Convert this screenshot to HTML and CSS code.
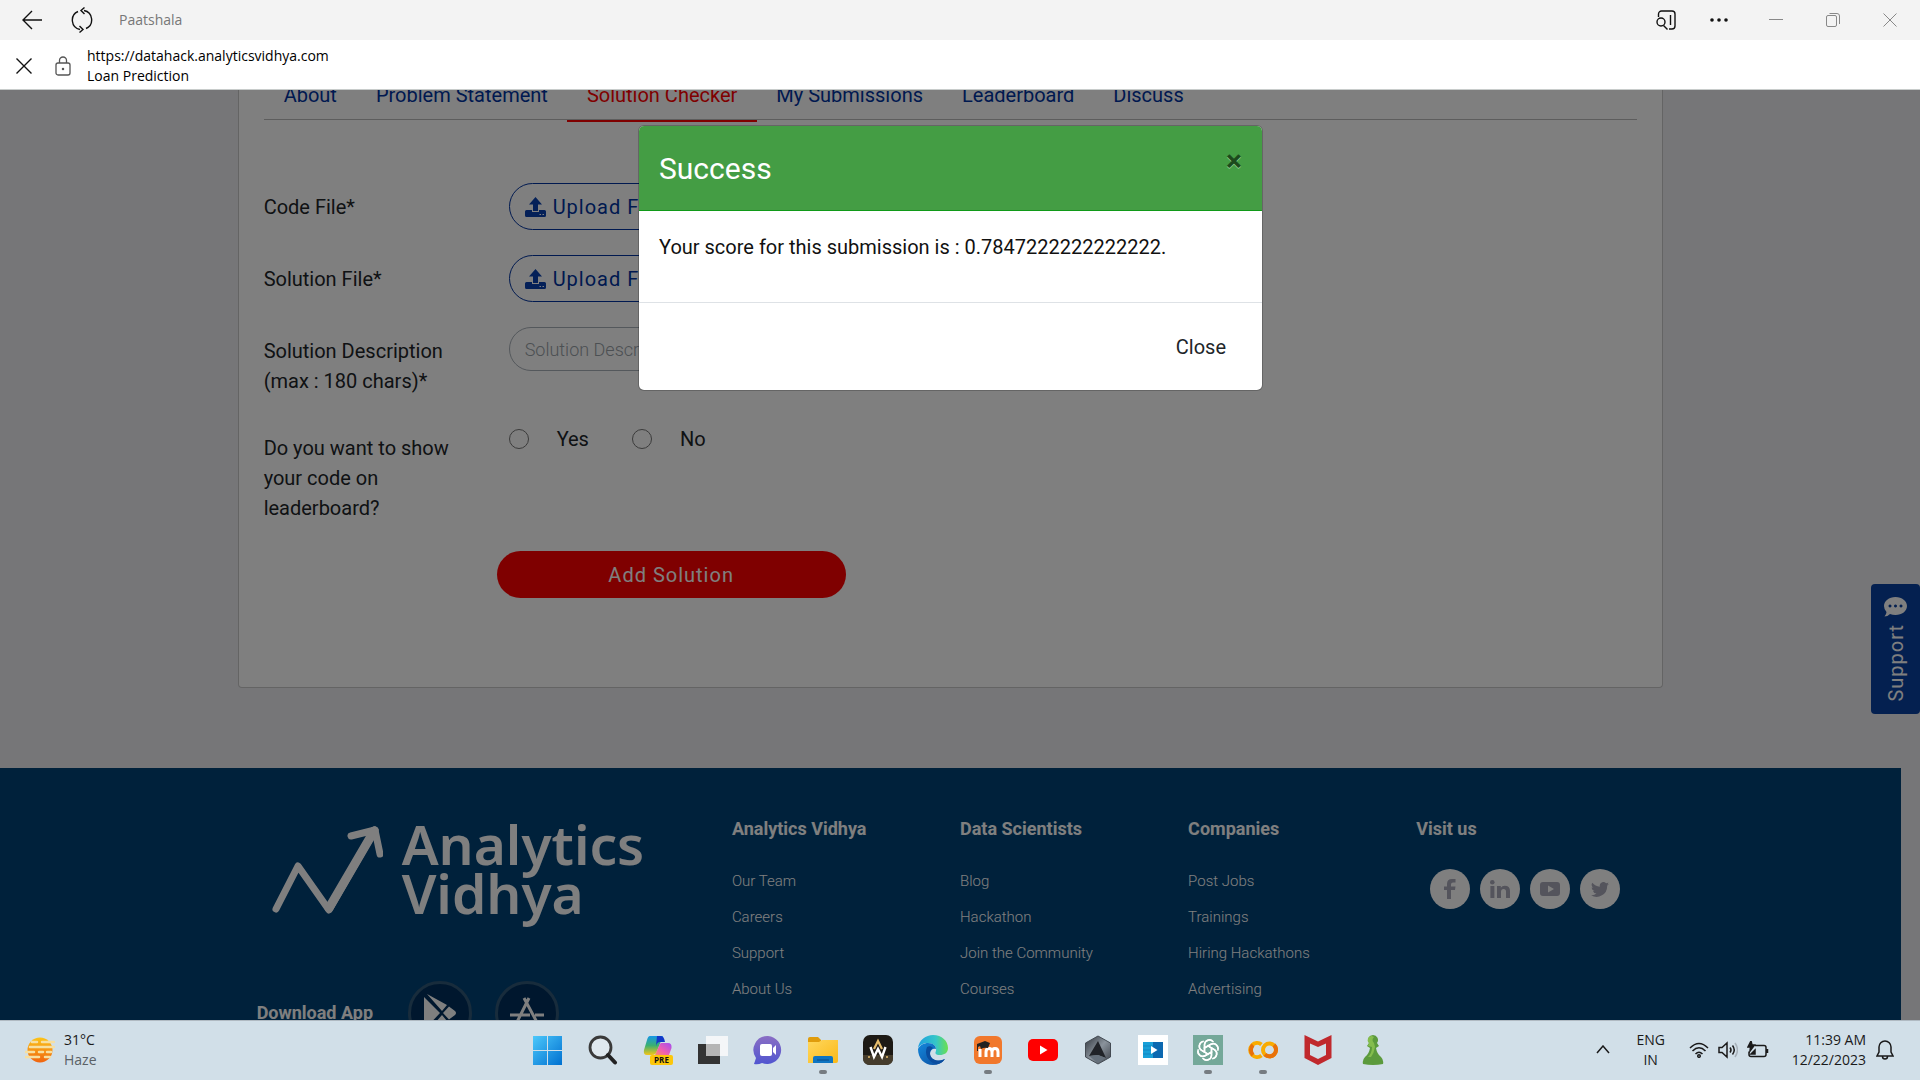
FILE: index.html
```html
<!DOCTYPE html>
<html lang="en">
<head>
<meta charset="utf-8">
<title>Loan Prediction</title>
<link rel="stylesheet" href="styles.css">
</head>
<body>
<header class="titlebar">
  <button class="icon-btn" aria-label="Back"><svg width="22" height="20" viewBox="0 0 22 20"><path d="M21 10H2M11 1L2 10l9 9"/></svg></button>
  <button class="icon-btn reload" aria-label="Refresh"><svg width="22" height="26" viewBox="0 0 22 26"><path d="M7 4.500A9.500 9.500 0 0 0 9 22.500M13 3.500a9.500 9.500 0 0 1 2 18M8.500 25.500l3.500-3-3.500-3.500M13.500.5L10 3.500l3.500 3.500"/></svg></button>
  <span class="app-name">Paatshala</span>
  <div class="window-tools">
    <button class="icon-btn" aria-label="Search in sidebar"><svg width="20" height="20" viewBox="0 0 20 20"><path d="M2.500 7V4a3 3 0 0 1 3-3H16a3 3 0 0 1 3 3v12a3 3 0 0 1-3 3h-3M14.500 5v10"/><circle cx="5" cy="12" r="4"/><path d="M7.500 15.500l4 4"/></svg></button>
    <button class="icon-btn" aria-label="More"><svg class="solid" width="20" height="20" viewBox="0 0 20 20"><circle cx="3" cy="10" r="1.800"/><circle cx="10" cy="10" r="1.800"/><circle cx="17" cy="10" r="1.800"/></svg></button>
    <button class="icon-btn dim" aria-label="Minimize"><svg width="14" height="14" viewBox="0 0 14 14"><path d="M0 6.500h14"/></svg></button>
    <button class="icon-btn dim" aria-label="Restore"><svg width="14" height="14" viewBox="0 0 14 14"><rect x=".5" y="2.500" width="10" height="11" rx="1.500"/><path d="M3.500.5H11a2.500 2.500 0 0 1 2.500 2.500v8"/></svg></button>
    <button class="icon-btn dim" aria-label="Close window"><svg width="14" height="14" viewBox="0 0 14 14"><path d="M.5.5l13 13M13.500.5l-13 13"/></svg></button>
  </div>
</header>
<div class="addressbar">
  <button class="icon-btn" aria-label="Stop"><svg width="16" height="16" viewBox="0 0 16 16"><path d="M.5.5l15 15M15.500.5l-15 15"/></svg></button>
  <svg class="lock" width="16" height="20" viewBox="0 0 16 20"><rect x="1" y="7" width="14" height="12" rx="2"/><path d="M4.500 7V4.500a3.500 3.500 0 0 1 7 0V7"/><circle cx="8" cy="13" r=".6"/></svg>
  <div class="address"><div>https://datahack.analyticsvidhya.com</div><div>Loan Prediction</div></div>
</div>

<div class="viewport">
  <div class="page">
    <main class="card">
      <nav class="tabs">
        <a href="#about">About</a><a href="#problem">Problem Statement</a><a class="active" href="#checker">Solution Checker</a><a href="#submissions">My Submissions</a><a href="#leaderboard">Leaderboard</a><a href="#discuss">Discuss</a>
      </nav>
      <form class="form">
        <label for="code">Code File*</label>
        <button class="upload" id="code" type="button"><svg width="21" height="20" viewBox="0 0 21 20"><path d="M10.500 0l6.500 7.500h-4V14H8V7.500H4z"/><path d="M0 14.500a1.500 1.500 0 0 1 1.500-1.500H7v2h7v-2h5.500a1.500 1.500 0 0 1 1.500 1.500v4a1.500 1.500 0 0 1-1.500 1.500h-18A1.500 1.500 0 0 1 0 18.500z"/><path class="led" d="M14.500 17h1.500v1h-1.500zM17.500 17H19v1h-1.500z"/></svg>Upload File</button>
        <label for="solution">Solution File*</label>
        <button class="upload" id="solution" type="button"><svg width="21" height="20" viewBox="0 0 21 20"><path d="M10.500 0l6.500 7.500h-4V14H8V7.500H4z"/><path d="M0 14.500a1.500 1.500 0 0 1 1.500-1.500H7v2h7v-2h5.500a1.500 1.500 0 0 1 1.500 1.500v4a1.500 1.500 0 0 1-1.500 1.500h-18A1.500 1.500 0 0 1 0 18.500z"/><path class="led" d="M14.500 17h1.500v1h-1.500zM17.500 17H19v1h-1.500z"/></svg>Upload File</button>
        <label for="description">Solution Description (max : 180 chars)*</label>
        <input class="description" id="description" type="text" placeholder="Solution Description">
        <span class="question">Do you want to show your code on leaderboard?</span>
        <div class="choices">
          <label><input type="radio" name="show">Yes</label>
          <label><input type="radio" name="show">No</label>
        </div>
        <button class="submit" type="button">Add Solution</button>
      </form>
    </main>
    <footer class="footer">
      <div class="footer-grid">
        <div class="brand">
          <div class="logo">
            <svg width="112" height="96" viewBox="0 0 112 96"><path class="trend" d="M5 87L27 44l31 44L104 8"/><path class="thick" d="M58 86L103 9"/><path class="head" d="M80 14l24-6 5 24"/></svg>
            <div class="wordmark"><div>Analytics</div><div>Vidhya</div></div>
          </div>
          <div class="download">
            <span>Download App</span>
            <a href="#play" aria-label="Google Play"><svg width="32" height="38" viewBox="0 0 32 38"><path d="M0 3l16 16L0 36zM3 0l20 11-5 6zM3 38l20-11-5-6zM25 12.500l6 4.500q2 2 0 4l-6 4.500L19 19z"/></svg></a>
            <a href="#ios" aria-label="App Store"><svg class="line" width="36" height="34" viewBox="0 0 36 34"><path d="M20 2L6 30M15 2l15 28M1 19h20M26 19h9"/></svg></a>
          </div>
        </div>
        <section><h2>Analytics Vidhya</h2><a href="#team">Our Team</a><a href="#careers">Careers</a><a href="#support">Support</a><a href="#us">About Us</a></section>
        <section><h2>Data Scientists</h2><a href="#blog">Blog</a><a href="#hackathon">Hackathon</a><a href="#community">Join the Community</a><a href="#courses">Courses</a></section>
        <section><h2>Companies</h2><a href="#jobs">Post Jobs</a><a href="#trainings">Trainings</a><a href="#hiring">Hiring Hackathons</a><a href="#ads">Advertising</a></section>
        <section><h2>Visit us</h2>
          <div class="social">
            <a href="#fb" aria-label="Facebook"><svg width="12" height="20" viewBox="0 0 12 20"><path d="M3 20v-9H0V7.500h3V5q0-5 5-5h3.500v3.500H9Q7 3.500 7 5.500v2h4.500L11 11H7v9z"/></svg></a>
            <a href="#in" aria-label="LinkedIn"><svg width="20" height="18" viewBox="0 0 20 18"><circle cx="2.300" cy="2.300" r="2.300"/><path d="M.4 6h4v12h-4zM7 6h3.800v1.700Q12 5.700 14.700 5.700 20 5.700 20 11v7h-4v-6.200q0-2.800-2.400-2.800Q11 9 11 12v6H7z"/></svg></a>
            <a href="#yt" aria-label="YouTube"><svg width="20" height="14" viewBox="0 0 20 14"><path fill-rule="evenodd" d="M3 0q7-.5 14 0 3 0 3 3v8q0 3-3 3-7 .5-14 0-3 0-3-3V3q0-3 3-3zm5 3.500v7l6-3.500z"/></svg></a>
            <a href="#tw" aria-label="Twitter"><svg width="18" height="15" viewBox="0 0 24 20"><path d="M24 2.400a10 10 0 0 1-2.800.8A5 5 0 0 0 23.300.5a10 10 0 0 1-3.100 1.200 4.900 4.900 0 0 0-8.400 4.500A14 14 0 0 1 1.700 1a4.900 4.900 0 0 0 1.500 6.600 5 5 0 0 1-2.200-.6 4.900 4.900 0 0 0 3.900 4.900 5 5 0 0 1-2.200.1 4.900 4.900 0 0 0 4.600 3.400A10 10 0 0 1 0 17.500 14 14 0 0 0 21.500 5a10 10 0 0 0 2.500-2.600z"/></svg></a>
          </div>
        </section>
      </div>
    </footer>
  </div>
  <button class="support"><svg width="23" height="20" viewBox="0 0 23 20"><path fill-rule="evenodd" d="M11.500 0C18 0 23 4 23 9s-5 9-11.500 9q-3 0-5.500-1-2.500 2.500-5.500 2.500Q2.500 17 2.500 15 0 12.500 0 9c0-5 5-9 11.500-9zM6 7.500a1.500 1.500 0 1 0 .01 0zm5.500 0a1.500 1.500 0 1 0 .01 0zm5.500 0a1.500 1.500 0 1 0 .01 0z"/></svg><span>Support</span></button>
  <div class="backdrop">
    <div class="modal" role="dialog" aria-labelledby="modal-title">
      <div class="modal-head"><h1 id="modal-title">Success</h1><button class="dismiss" aria-label="Dismiss">×</button></div>
      <div class="modal-body">Your score for this submission is : 0.7847222222222222.</div>
      <div class="modal-foot"><button class="close">Close</button></div>
    </div>
  </div>
</div>

<div class="taskbar">
  <svg width="0" height="0" class="defs"><defs>
    <linearGradient id="win" x2="1" y2="1"><stop offset="0" stop-color="#4cc8fb"/><stop offset="1" stop-color="#0070d0"/></linearGradient>
    <linearGradient id="sun" x2="0" y2="1"><stop offset="0" stop-color="#fcc419"/><stop offset="1" stop-color="#f06410"/></linearGradient>
    <linearGradient id="cop1" x2="0" y2="1"><stop offset="0" stop-color="#1496e8"/><stop offset=".5" stop-color="#3bb070"/><stop offset="1" stop-color="#f5c518"/></linearGradient>
    <linearGradient id="cop2" x1="1" x2="0" y2="1"><stop offset="0" stop-color="#a44cf0"/><stop offset=".6" stop-color="#f060b0"/><stop offset="1" stop-color="#fb9060"/></linearGradient>
    <linearGradient id="chat" x2="0" y2="1"><stop offset="0" stop-color="#8a6ec4"/><stop offset="1" stop-color="#5055d0"/></linearGradient>
    <linearGradient id="folder" x2="1" y2="1"><stop offset="0" stop-color="#ffd75e"/><stop offset="1" stop-color="#fbb917"/></linearGradient>
    <linearGradient id="edge1" x2="1"><stop offset="0" stop-color="#1fa0e0"/><stop offset=".6" stop-color="#35c6c8"/><stop offset="1" stop-color="#6be04c"/></linearGradient>
    <linearGradient id="edge2" x2="1" y2="1"><stop offset="0" stop-color="#1488dc"/><stop offset="1" stop-color="#0b4a9c"/></linearGradient>
    <linearGradient id="hex" x2="1" y2="1"><stop offset="0" stop-color="#30353c"/><stop offset=".5" stop-color="#8a939c"/><stop offset="1" stop-color="#3a3f47"/></linearGradient>
  </defs></svg>
  <div class="weather">
    <svg width="30" height="26" viewBox="0 0 30 26"><circle cx="15" cy="13" r="12.500" fill="url(#sun)"/><path d="M7 5h5M17 5h12M5 10h24M0 15h9M14 15h4M22 15h4M0 20h14M20 20h5" stroke="#f7dfa0" stroke-width="2.500" stroke-linecap="round"/></svg>
    <div><div>31°C</div><div class="muted">Haze</div></div>
  </div>
  <div class="apps">
    <button aria-label="Start"><svg viewBox="0 0 30 30"><path fill="url(#win)" d="M0 1h14v14H0zM15 1h14v14H15zM0 16h14v14H0zM15 16h14v14H15z"/></svg></button>
    <button aria-label="Search"><svg viewBox="0 0 30 30"><circle cx="12.500" cy="12.500" r="10.500" fill="#dfe8ee" stroke="#3a3a3a" stroke-width="2.800"/><path d="M20 20l7 7.500" stroke="#222" stroke-width="4" stroke-linecap="round"/></svg></button>
    <button aria-label="Copilot"><svg viewBox="0 0 30 30"><path fill="url(#cop1)" d="M7 1h13l-6 15q-1 4-5 4H4q-4 0-3-5L4 5q1-4 3-4z"/><path fill="#1238c8" d="M14 1h4q3 0 4 6h-5q-3 0-4 4z"/><path fill="url(#cop2)" d="M18 8h7q4 0 3.500 5L26 20H12l4-9q1-3 2-3z"/><rect x="7" y="20" width="23" height="10" rx="2" fill="#fcc70a"/><text x="18.500" y="28" text-anchor="middle" class="pre">PRE</text></svg></button>
    <button aria-label="Task view"><svg viewBox="0 0 30 30"><path fill="#333" d="M0 9h22v20H0z"/><path fill="#fafafa" fill-opacity=".85" d="M8 1h22v20H8z"/><path fill="#b5b5b5" d="M8 9h14v12H8z"/></svg></button>
    <button aria-label="Chat"><svg viewBox="0 0 30 30"><path fill="url(#chat)" d="M15 1a14 14 0 1 1-6 27q-4 2-8 1 1-3 2-6A14 14 0 0 1 15 1z"/><rect x="7" y="9" width="12" height="12" rx="2" fill="#fff"/><path fill="#fff" d="M20 13l3-3v10l-3-3z"/></svg></button>
    <button class="running" aria-label="File Explorer"><svg viewBox="0 0 30 30"><path fill="#e09c0c" d="M0 4q0-2 2-2h8l3 3v6H0z"/><path fill="url(#folder)" d="M0 7h11l3-2h16v21q0 2-2 2H0z"/><path fill="#0f75c2" d="M5 23q0-2 2-2h16q2 0 2 2v5H5z"/><path d="M9 25h12" stroke="#0a4a86"/></svg></button>
    <button aria-label="WA"><svg viewBox="0 0 30 30"><rect width="30" height="30" rx="7" fill="#1d1a15"/><path d="M0 20h30v3q0 7-7 7H7q-7 0-7-7z" fill="#453c2c"/><path d="M11 14l4-8 4 8" fill="none" stroke="#e6bd6c" stroke-width="2.200"/><path d="M7.500 12l3.500 10 4-8 4 8 3.500-10" fill="none" stroke="#fff" stroke-width="2.400"/><circle cx="6" cy="22" r="1" fill="#e6bd6c"/><circle cx="24" cy="22" r="1" fill="#e6bd6c"/></svg></button>
    <button aria-label="Edge"><svg viewBox="0 0 30 30"><path fill="url(#edge1)" d="M0 13C1 5 8 0 15 0c9 0 15 6 15 13 0 5-4 7-8 7-5 0-5-2-4-4 1-5-3-8-8-8-5 0-8 2-10 5z"/><path fill="url(#edge2)" d="M0 14c2-4 6-6 10-6 5 0 8 3 8 6-3-1-6 1-6 5 0 5 6 8 12 6l3-1c-3 4-7 6-12 6C6 30 0 23 0 14z"/><path fill="#0a4d9f" d="M9 12c-3 7 1 15 9 17 4 0 7-2 9-5-8 4-15 0-15-6 0-2 1-4 3-5-2-2-4-2-6-1z"/></svg></button>
    <button class="running" aria-label="Moodle"><svg viewBox="0 0 30 30"><rect x="1" y="1" width="28" height="28" rx="6" fill="#f1782c"/><path d="M7 22v-8M13 22v-5q0-3.500 3-3.500t3 3.500v5M19 17q0-3.500 3-3.500t3 3.500v5" fill="none" stroke="#fff" stroke-width="3"/><path fill="#222" d="M4 9l8-3 5 2-2 5q-4-1-7 1l-1-3-2 1v4H4z"/></svg></button>
    <button aria-label="YouTube"><svg viewBox="0 0 30 30"><rect y="4" width="30" height="22" rx="5" fill="#f00"/><path fill="#fff" d="M12 10.500v9l7.500-4.500z"/></svg></button>
    <button aria-label="Hexagon"><svg viewBox="0 0 30 30"><path fill="url(#hex)" stroke="#444b53" d="M15 1l12.500 7v14L15 29 2.500 22V8z"/><path fill="#202328" d="M15 6l8 17-8-3-9 1z"/><path fill="#65707b" d="M15 20l8 3-8 5-9-7z"/></svg></button>
    <button aria-label="Video"><svg viewBox="0 0 30 30"><path fill="#fff" d="M0 0h30v30H0z"/><path fill="#18a0d8" d="M5 7h10v16H5z"/><path fill="#0c68b0" d="M15 7h10v16H15z"/><path d="M5 11h10M5 15h10M5 19h10" stroke="#1285c0"/><path fill="#fff" d="M13 11v8l6.500-4z"/></svg></button>
    <button class="running" aria-label="ChatGPT"><svg viewBox="0 0 30 30"><path fill="#74a899" d="M0 0h30v30H0z"/><g fill="none" stroke="#fff" stroke-width="1.500" stroke-linejoin="round"><path id="petal" d="M11.500 18V9.500a5 5 0 0 1 9-2.500M11.500 13l7-4a4.700 4.700 0 0 1 6.500 5"/><use href="#petal" transform="rotate(60 15 15)"/><use href="#petal" transform="rotate(120 15 15)"/><use href="#petal" transform="rotate(180 15 15)"/><use href="#petal" transform="rotate(240 15 15)"/><use href="#petal" transform="rotate(300 15 15)"/></g></svg></button>
    <button class="running" aria-label="Colab"><svg viewBox="0 0 30 30"><g fill="none" stroke-width="4"><path d="M13.500 20.500a7 7 0 1 1 0-11" stroke="#f9ab00"/><path d="M5 10a7 7 0 0 0 0 10" stroke="#e8710a"/><circle cx="21.500" cy="15" r="6.500" stroke="#f9ab00"/><path d="M26 10a6.500 6.500 0 0 1-9 9.500" stroke="#e8710a"/></g></svg></button>
    <button aria-label="McAfee"><svg viewBox="0 0 30 30"><path fill="#c0292d" fill-rule="evenodd" d="M1.500 0L15 6.500 28.500 0v23L15 30 1.500 23zM7 8.500V20l8 4 8-4V8.500L15 12z"/></svg></button>
    <button aria-label="Chess"><svg viewBox="0 0 30 30"><path fill="#5b9a3c" d="M15 0a5 5 0 0 1 4 8l2 3-3 2q1 6 5 9 3 3 2 7-10 2-20 0-1-4 2-7 4-3 5-9l-3-2 2-3a5 5 0 0 1 4-8z"/><path fill="#84bd4d" d="M14 1a4 4 0 0 0-3 7l-1 3 4 1q0 6-4 10h3q3-4 4-10l-1-4q-3-3 0-6z"/></svg></button>
  </div>
  <div class="tray">
    <button aria-label="Show hidden icons"><svg width="14" height="9" viewBox="0 0 14 9"><path d="M1 8l6-7 6 7"/></svg></button>
    <div class="lang">ENG<br>IN</div>
    <div class="status">
      <svg width="20" height="16" viewBox="0 0 20 16"><path d="M1 6q9-9 18 0M3.500 9q6.500-6.500 13 0M6.500 12q3.500-3.500 7 0"/><circle cx="10" cy="14" r="1.300"/></svg>
      <svg width="20" height="18" viewBox="0 0 20 18"><path d="M1 6.500h3l5-4.500v14l-5-4.500H1zM12 6.500q2 2.500 0 5M14.500 4.500q3.500 4.500 0 9"/><path class="faint" d="M17 2q5 7 0 14"/></svg>
      <svg width="22" height="18" viewBox="0 0 22 18"><path d="M8 4.500h9a2 2 0 0 1 2 2v7a2 2 0 0 1-2 2H4a2 2 0 0 1-2-2v-3M20.500 8v4"/><path class="fill" d="M4 0L1 6h2.500L3 10l4.500-6H5zM4 13l4-4v4z"/></svg>
    </div>
    <div class="clock">11:39 AM<br>12/22/2023</div>
    <svg width="18" height="20" viewBox="0 0 18 20"><path d="M9 1a6 6 0 0 1 6 6v5l2 4H1l2-4V7a6 6 0 0 1 6-6zM6.500 16.500a2.500 2.500 0 0 0 5 0"/></svg>
  </div>
</div>
</body>
</html>
```
FILE: styles.css
```css
* { box-sizing: border-box; }

body {
  margin: 0;
  height: 100vh;
  display: flex;
  flex-direction: column;
  overflow: hidden;
  font-family: Roboto, sans-serif;
  font-size: 20px;
  line-height: 30px;
  color: #212529;
}

button {
  font: inherit;
  color: inherit;
  background: none;
  border: 0;
  padding: 0;
}

a { text-decoration: none; color: inherit; }
svg { display: block; flex: none; }

/* Window chrome */
.titlebar, .addressbar {
  display: flex;
  align-items: center;
  flex: none;
  font-family: "Open Sans", sans-serif;
  font-size: 14px;
  line-height: 20px;
}
.titlebar { height: 40px; background: #f3f3f3; padding: 0 21px; }
.icon-btn { display: grid; place-items: center; }
.icon-btn svg, .lock { fill: none; stroke: #111; stroke-width: 1.4; }
.icon-btn .solid { fill: #111; stroke: none; }
.icon-btn.dim svg { stroke: #888; stroke-width: 1; }
.reload { margin-left: 28px; }
.app-name { margin-left: 26px; color: #777; }
.window-tools { margin-left: auto; display: flex; gap: 38px; }
.window-tools .icon-btn { width: 20px; height: 20px; }
.window-tools .icon-btn:first-child { margin-right: -5px; }
.window-tools .icon-btn:nth-child(n+2) { margin-right: -1px; }
.addressbar { height: 50px; background: #fff; padding: 2px 16px 0; border-bottom: 1px solid #c8cccb; color: #000; }
.lock { margin-left: 23px; stroke: #555; stroke-width: 1.3; }
.address { margin-left: 16px; }

/* Scrolled page area */
.viewport {
  position: relative;
  flex: 1;
  min-height: 0;
  overflow: hidden;
  background: #ecedf1;
}
.page { margin-right: 19px; }

.card {
  width: 75%;
  margin: 0 auto 80px;
  padding: 0 25px 89px;
  background: #fff;
  border: 1px solid #c8c8c8;
  border-top: 0;
  border-radius: 0 0 4px 4px;
}
.tabs {
  display: flex;
  margin-top: -10px;
  border-bottom: 1px solid #bbb;
  color: #0033a0;
}
.tabs a { padding: 0 20px 10px; margin: 0 -1px -3px 0; border-bottom: 2px solid transparent; }
.tabs .active { color: #f00; border-color: #f00; }

.form {
  display: grid;
  grid-template-columns: 245px 1fr;
  justify-items: start;
  align-items: start;
  row-gap: 25px;
  padding-top: 63px;
}
.form > label, .question { width: 200px; padding: 9px 0 3px; }
.upload, .submit { height: 47px; border-radius: 24px; letter-spacing: 1px; }
.upload {
  display: flex;
  align-items: center;
  gap: 7px;
  width: 200px;
  padding: 0 15px;
  border: 1px solid #0033a0;
  color: #0033a0;
}
.upload svg { fill: #0840b0; }
.upload .led { fill: #fff; }
.description {
  width: 350px;
  height: 44px;
  padding: 0 15px;
  border: 1px solid #a8b0b8;
  border-radius: 22px;
  font: 300 18px Roboto, sans-serif;
  background: #fff;
}
.description::placeholder { color: #98a0a6; opacity: 1; }
.choices { display: flex; gap: 43px; }
.choices label { display: flex; align-items: center; gap: 28px; }
.choices input {
  appearance: none;
  width: 20px;
  height: 20px;
  margin: 0;
  border: 1px solid #767676;
  border-radius: 50%;
}
.submit {
  grid-column: 1 / -1;
  width: 349px;
  margin-left: 233px;
  background: #f00;
  color: #fff;
}

/* Footer */
.footer { background: #004276; color: #fff; padding-top: 46px; height: 320px; }
.footer-grid {
  display: grid;
  grid-template-columns: 475fr repeat(4, 228fr);
  width: 73%;
  margin: 0 auto;
}
.footer h2 { margin: 0 0 22px; font-size: 18px; line-height: 30px; font-weight: 700; }
.footer section > a { display: block; height: 36px; font-size: 15px; line-height: 30px; font-weight: 300; }
.logo { display: flex; gap: 19px; padding: 8px 0 0 14px; }
.logo svg { fill: none; stroke: #fff; stroke-width: 7; stroke-linecap: round; stroke-linejoin: round; }
.logo .thick { stroke-width: 9; }
.wordmark { margin-top: -3px; font: 600 55px/49px "Noto Sans", sans-serif; }
.download { display: flex; align-items: center; height: 64px; margin-top: 63px; font-size: 18px; font-weight: 700; }
.download span { width: 151px; }
.download a {
  display: grid;
  place-items: center;
  width: 64px;
  height: 64px;
  margin-right: 23px;
  border: 3px solid #305878;
  border-radius: 50%;
  background: #002f5c;
}
.download svg { fill: #fff; }
.download .line { fill: none; stroke: #fff; stroke-width: 3; }
.social { display: flex; gap: 10px; padding: 3px 0 0 14px; }
.social a { display: grid; place-items: center; width: 40px; height: 40px; border-radius: 50%; background: #fff; }
.social svg { fill: #a8a8b8; }

.support {
  position: absolute;
  right: 0;
  top: 494px;
  display: flex;
  flex-direction: column;
  align-items: center;
  gap: 7px;
  width: 49px;
  height: 130px;
  padding: 13px 0 0;
  border-radius: 4px;
  background: #0840a0;
  color: #fff;
  letter-spacing: 1px;
}
.support svg { fill: #fff; }
.support span { writing-mode: vertical-rl; transform: rotate(180deg); }

/* Dialog */
.backdrop {
  position: absolute;
  inset: 0;
  display: flex;
  justify-content: center;
  align-items: flex-start;
  padding: 35px 19px 0 0;
  background: rgba(0, 0, 0, .5);
}
.modal {
  width: 625px;
  background: #fff;
  background-clip: padding-box;
  border: 1px solid rgba(0, 0, 0, .2);
  border-radius: 6px;
  overflow: hidden;
}
.modal-head {
  display: flex;
  justify-content: space-between;
  align-items: flex-start;
  padding: 20px 20px 18px;
  background: #449d44;
  border-bottom: 1px solid #109a18;
  color: #fff;
}
.modal-head h1 { margin: 0; font-size: 30px; line-height: 46px; font-weight: 400; }
.dismiss { color: #1c4a1c; font-size: 30px; line-height: 30px; font-weight: 700; text-shadow: 0 1px 0 #8fce8f; }
.modal-body { padding: 21px 20px 40px; color: #111; }
.modal-foot { display: flex; justify-content: flex-end; padding: 29px 36px 28px; border-top: 1px solid #dee2e6; }

/* Taskbar */
.taskbar {
  flex: none;
  display: grid;
  grid-template-columns: 1fr auto 1fr;
  align-items: center;
  height: 60px;
  padding-bottom: 2px;
  background: #d1dfe8;
  border-top: 1px solid #b0bac2;
  font-family: "Open Sans", sans-serif;
  font-size: 14px;
  line-height: 20px;
  color: #1a1a1a;
}
.defs { position: absolute; }
.weather { display: flex; align-items: center; gap: 9px; padding-left: 25px; }
.muted { color: #5a6166; }
.apps { display: flex; }
.apps button { position: relative; width: 55px; height: 57px; display: grid; place-items: center; }
.apps svg { width: 30px; height: 30px; }
.running::after {
  content: "";
  position: absolute;
  bottom: 4px;
  left: 24px;
  width: 8px;
  height: 4px;
  border-radius: 2px;
  background: #767c81;
}
.pre { font: 700 8px "Open Sans", sans-serif; fill: #111; }
.tray { display: flex; align-items: center; justify-content: flex-end; padding-right: 26px; }
.tray svg { fill: none; stroke: #1a1a1a; stroke-width: 1.5; }
.tray .fill { fill: #1a1a1a; }
.tray .faint { stroke: #a8b2ba; }
.lang { width: 36px; margin: 0 20px 0 23px; text-align: center; }
.status { display: flex; align-items: center; gap: 9px; }
.clock { margin: 0 10px 0 23px; text-align: right; }
```
